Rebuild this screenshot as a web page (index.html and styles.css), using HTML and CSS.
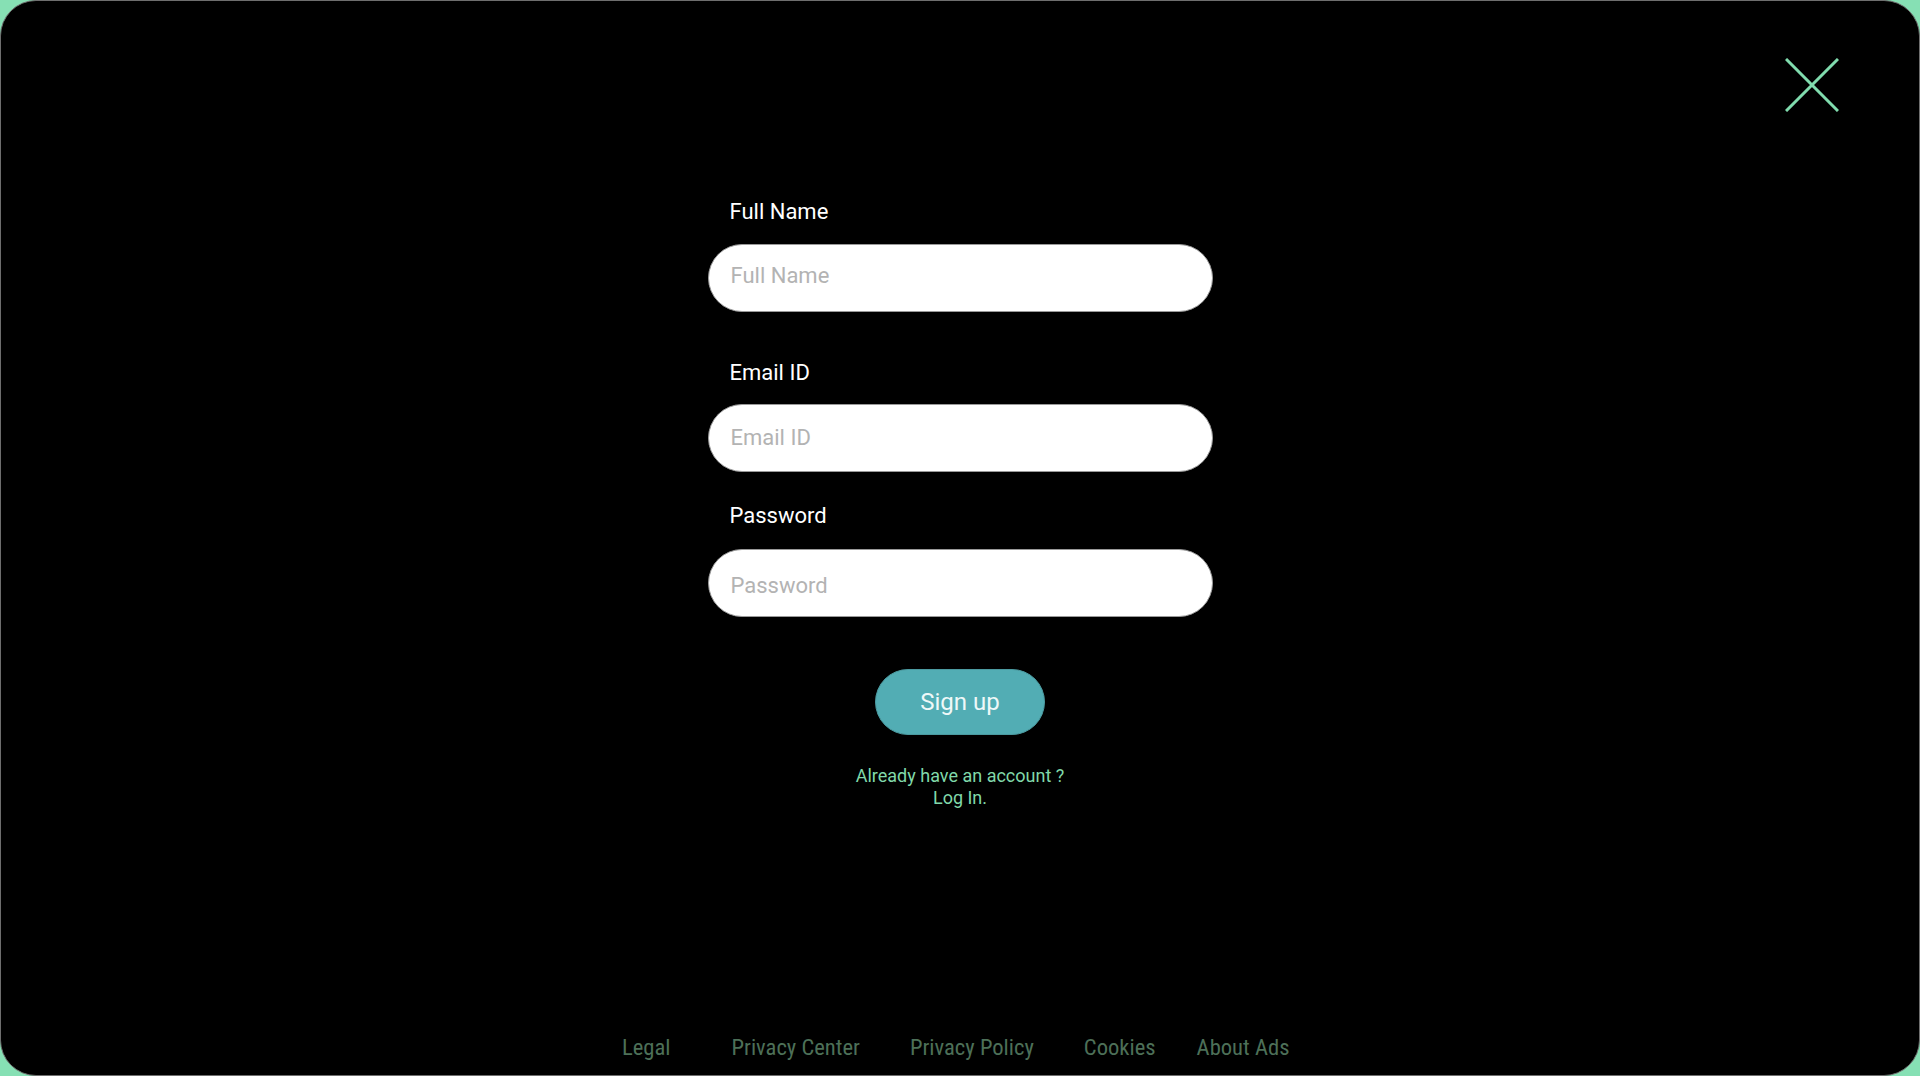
FILE: index.html
```html
<!DOCTYPE html>
<html lang="en">
<head>
<meta charset="utf-8">
<title>Sign up</title>
<link rel="stylesheet" href="styles.css">
</head>
<body>
<div class="frame">
  <button class="close" aria-label="Close">
    <svg width="54" height="54" viewBox="0 0 54 54"><path d="M1 1 L53 53 M53 1 L1 53" stroke="#80dcae" stroke-width="3" fill="none"/></svg>
  </button>
  <form class="form">
    <label class="label l1">Full Name</label>
    <input class="field f1" type="text" placeholder="Full Name">
    <label class="label l2">Email ID</label>
    <input class="field f2" type="email" placeholder="Email ID">
    <label class="label l3">Password</label>
    <input class="field f3" type="password" placeholder="Password">
    <button type="button" class="signup">Sign up</button>
    <p class="already">Already have an account ?<br>Log In.</p>
  </form>
  <nav class="footer">
    <a class="flink legal">Legal</a>
    <a class="flink">Privacy Center</a>
    <a class="flink">Privacy Policy</a>
    <a class="flink cookies">Cookies</a>
    <a class="flink">About Ads</a>
  </nav>
</div>
</body>
</html>
```
FILE: styles.css
```css
html, body {
  margin: 0;
  padding: 0;
}
body {
  background: #86e0b4;
  width: 1920px;
  height: 1076px;
  overflow: hidden;
  font-family: Roboto, "Liberation Sans", sans-serif;
}
.frame {
  position: relative;
  box-sizing: border-box;
  width: 1920px;
  height: 1076px;
  background: #000;
  border: 1px solid #6e6e6e;
  border-radius: 36px;
  display: flex;
  flex-direction: column;
  align-items: center;
}
.close {
  position: absolute;
  top: 57px;
  right: 80px;
  padding: 0;
  margin: 0;
  background: none;
  border: 0;
  width: 54px;
  height: 54px;
  line-height: 0;
}
.form {
  width: 505px;
  margin-top: 198px;
  display: flex;
  flex-direction: column;
  align-items: stretch;
}
.label {
  color: #fff;
  font-size: 22px;
  line-height: 25px;
  padding-left: 22px;
  margin-bottom: 20px;
}
.l2 { margin-top: 48px; margin-bottom: 19px; }
.l3 { margin-top: 31px; margin-bottom: 21px; }
.field {
  box-sizing: border-box;
  height: 68px;
  border-radius: 34px;
  border: 1px solid #9a9a9a;
  background: #fff;
  padding: 0 22px 1px;
  font-family: Roboto, "Liberation Sans", sans-serif;
  font-size: 22px;
  color: #333;
  outline: none;
}
.f1 { padding-bottom: 6px; }
.f3 { padding-top: 4px; padding-bottom: 0; }
.field::placeholder { color: #b3b3b3; }
.signup {
  align-self: center;
  margin-top: 52px;
  width: 170px;
  height: 66px;
  border-radius: 33px;
  border: 1px solid #4b9aa0;
  background: #52adb4;
  color: #eef8f8;
  font-family: Roboto, "Liberation Sans", sans-serif;
  font-size: 24px;
  padding: 0;
}
.already {
  margin: 30px 0 0;
  text-align: center;
  color: #80d9aa;
  font-size: 18px;
  line-height: 22px;
}
.footer {
  margin-top: auto;
  margin-bottom: 14px;
  align-self: flex-start;
  margin-left: 621px;
  display: flex;
  gap: 50px;
}
.flink {
  color: #4d7058;
  font-size: 22.6px;
  line-height: 27px;
  font-stretch: condensed;
}
.legal { margin-right: 11px; }
.cookies { margin-right: -9px; }
```
